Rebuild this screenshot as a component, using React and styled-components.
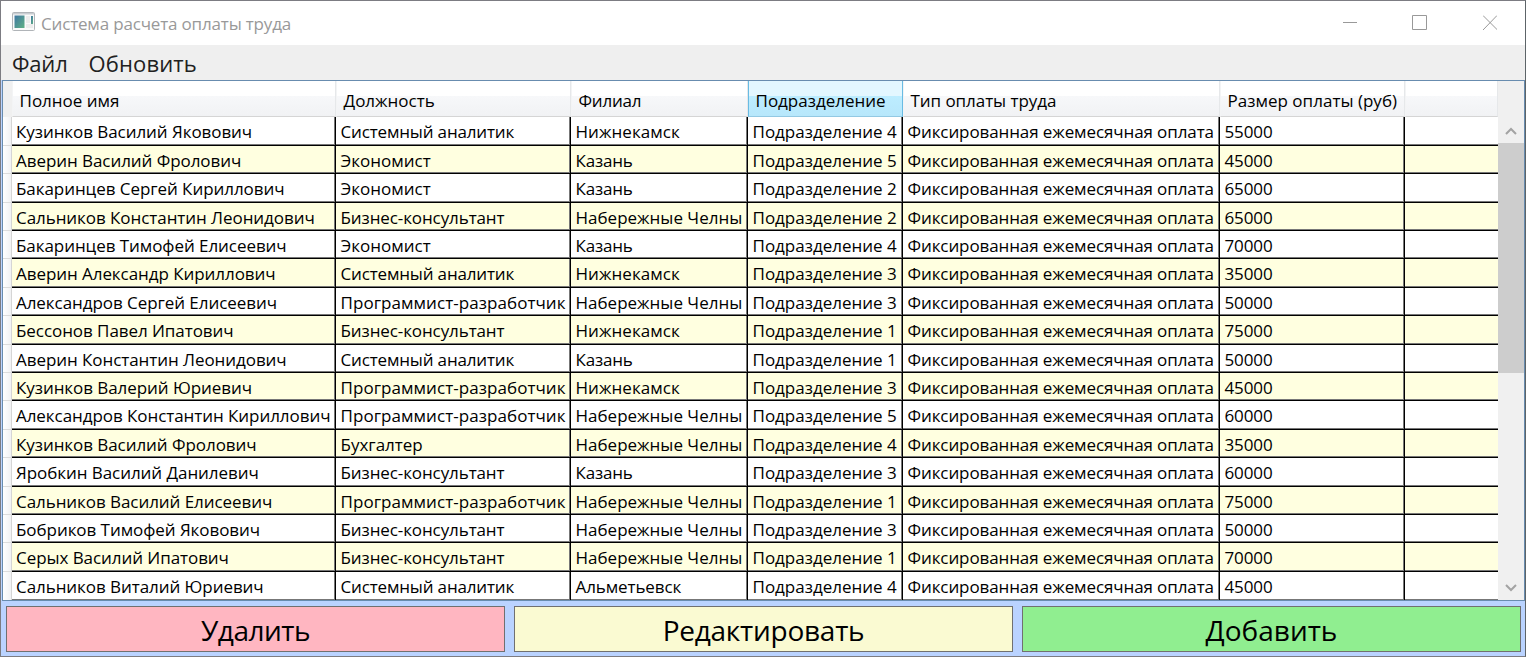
import React from "react";
import styled, { createGlobalStyle } from "styled-components";

const GlobalStyle = createGlobalStyle`
  * { box-sizing: border-box; }
  html, body { margin: 0; padding: 0; overflow: hidden; }
  body { font-family: "Open Sans", "Noto Sans", sans-serif; color: #000; }
`;

const COLUMNS = "324px 235px 177px 155px 317px 185px 93px";

const Window = styled.div`
  width: 1526px;
  height: 657px;
  display: flex;
  flex-direction: column;
  background: #bad3ff;
  border: 1px solid #7c7c82;
  border-right-color: #5d6468;
`;

const TitleBar = styled.header`
  height: 44px;
  flex: none;
  display: flex;
  align-items: center;
  padding: 0 0 0 11px;
  background: #fff;
`;

const AppIcon = styled.svg`
  width: 23px;
  height: 19px;
  margin-top: -3px;
  margin-right: 6px;
`;

const Title = styled.h1`
  flex: 1;
  margin: 0;
  padding-top: 2px;
  font-size: 17px;
  font-weight: 400;
  line-height: 24px;
  letter-spacing: -0.17px;
  color: #999;
  white-space: nowrap;
`;

const Controls = styled.div`
  display: flex;
`;

const ControlButton = styled.button`
  width: 70px;
  height: 44px;
  padding: 0;
  border: 0;
  background: none;
  display: flex;
  align-items: center;
  justify-content: center;
`;

const MenuBar = styled.nav`
  height: 35px;
  flex: none;
  display: flex;
  gap: 21px;
  padding-left: 11px;
  background: #efefef;
`;

const MenuItem = styled.span`
  font-size: 22px;
  line-height: 37px;
  letter-spacing: ${(p) => p.$spacing}px;
  color: #212121;
  white-space: nowrap;
`;

const DataGrid = styled.main`
  height: 521px;
  flex: none;
  display: flex;
  margin-left: 1px;
  border: 1px solid #688caf;
  background: #fff;
  overflow: hidden;
`;

const Table = styled.div`
  width: 1495px;
  flex: none;
  overflow: hidden;
`;

const HeaderRow = styled.div`
  display: grid;
  grid-template-columns: 9px ${COLUMNS};
  grid-template-rows: 36px;
  height: 36px;
`;

const Corner = styled.div`
  background: #f0f0f0;
`;

const HeaderCell = styled.div`
  padding-left: 6.5px;
  font-size: 17px;
  line-height: 40px;
  letter-spacing: ${(p) => p.$spacing || 0}px;
  white-space: nowrap;
  background: ${(p) =>
    p.$active
      ? "linear-gradient(#e3f7ff 0 15px, #bdedff 15px, #b7e7fb 100%)"
      : "linear-gradient(#fff 0 15px, #f7f8fa 15px, #f1f2f4 100%)"};
  border-bottom: 1px solid ${(p) => (p.$active ? "#93c9e3" : "#d5d5d5")};
  border-right: 1px solid ${(p) => (p.$active ? "#69bbe3" : "#e6e8ea")};
  border-left: 1px solid ${(p) => (p.$active ? "#69bbe3" : "#f3f4f5")};
`;

const Row = styled.div`
  display: grid;
  grid-template-columns: 9px ${COLUMNS};
  grid-template-rows: ${(p) => p.$height}px;
  height: ${(p) => p.$height}px;
`;

const RowHandle = styled.div`
  background: linear-gradient(90deg, #fff, #f1f2f4);
  border-right: 1px solid #d5d5d5;
  border-bottom: 1px solid #dcdcdc;
`;

const Cell = styled.div`
  padding-left: 4.5px;
  font-size: 17px;
  line-height: 29px;
  letter-spacing: ${(p) => p.$spacing || 0}px;
  white-space: nowrap;
  background: ${(p) => (p.$alt ? "#ffffe0" : "#fff")};
  border-bottom: 1px solid #000;
  border-right: ${(p) => (p.$last ? "0" : "1px solid #000")};
  box-shadow: inset ${(p) => (p.$last ? "0" : "-1px")} -1px 0 #777;
`;

const NameCell = styled(Cell)`
  padding-left: 4px;
`;

const ScrollBar = styled.div`
  width: 26px;
  flex: none;
  display: flex;
  flex-direction: column;
  background: #f0f0f0;
  padding-top: 36px;
`;

const ScrollArrow = styled.div`
  height: 26px;
  padding-top: 2px;
  flex: none;
  display: flex;
  align-items: center;
  justify-content: center;
`;

const ScrollThumb = styled.div`
  height: 230px;
  background: #cdcdcd;
  margin-bottom: auto;
`;

const Actions = styled.footer`
  display: grid;
  grid-template-columns: 499px 499px 499px;
  column-gap: 9px;
  padding: 5px 0 0 5px;
`;

const ActionButton = styled.button`
  height: 46px;
  padding: 2px 0 0;
  border: 1px solid #707070;
  border-radius: 0;
  background: ${(p) => p.$color};
  font-family: inherit;
  font-size: 28px;
  line-height: 42px;
  letter-spacing: ${(p) => p.$spacing || 0}px;
  color: #000;
`;

const headers = [
  ["Полное имя", 0],
  ["Должность", 0],
  ["Филиал", -0.2],
  ["Подразделение", 0],
  ["Тип оплаты труда", -0.05],
  ["Размер оплаты (руб)", 0.02],
  ["", 0],
];

const SA = "Системный аналитик";
const EC = "Экономист";
const BC = "Бизнес-консультант";
const PR = "Программист-разработчик";
const NK = "Нижнекамск";
const KZ = "Казань";
const NC = "Набережные Челны";

const jobSpacing = { [SA]: -0.16, [BC]: -0.1, [PR]: 0.06 };
const citySpacing = { [KZ]: -0.2, [NK]: 0.05, "Альметьевск": -0.1 };

// Row pitch is 28.4px, spread over whole pixels in a cycle of five rows.
const rowHeights = [29, 28, 29, 28, 28];

const people = [
  ["Кузинков Василий Яковович", SA, NK, 4, 55000],
  ["Аверин Василий Фролович", EC, KZ, 5, 45000],
  ["Бакаринцев Сергей Кириллович", EC, KZ, 2, 65000],
  ["Сальников Константин Леонидович", BC, NC, 2, 65000],
  ["Бакаринцев Тимофей Елисеевич", EC, KZ, 4, 70000],
  ["Аверин Александр Кириллович", SA, NK, 3, 35000],
  ["Александров Сергей Елисеевич", PR, NC, 3, 50000],
  ["Бессонов Павел Ипатович", BC, NK, 1, 75000],
  ["Аверин Константин Леонидович", SA, KZ, 1, 50000],
  ["Кузинков Валерий Юриевич", PR, NK, 3, 45000],
  ["Александров Константин Кириллович", PR, NC, 5, 60000],
  ["Кузинков Василий Фролович", "Бухгалтер", NC, 4, 35000],
  ["Яробкин Василий Данилевич", BC, KZ, 3, 60000],
  ["Сальников Василий Елисеевич", PR, NC, 1, 75000],
  ["Бобриков Тимофей Яковович", BC, NC, 3, 50000],
  ["Серых Василий Ипатович", BC, NC, 1, 70000],
  ["Сальников Виталий Юриевич", SA, "Альметьевск", 4, 45000],
];

export default function App() {
  return (
    <>
      <GlobalStyle />
      <Window>
        <TitleBar>
          <AppIcon viewBox="0 0 23 19">
            <defs>
              <linearGradient id="pane" x1="0" y1="0" x2="1" y2="1">
                <stop offset="0" stopColor="#3f77a3" />
                <stop offset="1" stopColor="#5fb184" />
              </linearGradient>
            </defs>
            <rect x="0.5" y="0.5" width="22" height="18" rx="1" fill="#fafafa" stroke="#b0b4b8" />
            <rect x="1" y="1" width="21" height="1.5" fill="#c9cdd2" />
            <rect x="2.5" y="3.5" width="10" height="12.5" fill="url(#pane)" />
            <rect x="14" y="4" width="4" height="7" fill="#ececec" />
            <rect x="14" y="12" width="7" height="4" fill="#ececec" />
            <rect x="19" y="4" width="2" height="8" fill="url(#pane)" />
          </AppIcon>
          <Title>Система расчета оплаты труда</Title>
          <Controls>
            <ControlButton>
              <svg width="14" height="16"><path d="M0 7.5H14" stroke="#999" /></svg>
            </ControlButton>
            <ControlButton>
              <svg width="16" height="16"><path d="M.5 .5H14.5V14.5H.5Z" fill="none" stroke="#999" /></svg>
            </ControlButton>
            <ControlButton>
              <svg width="14" height="16"><path d="M0 .5L14.5 15M14 .5L0 15" stroke="#999" /></svg>
            </ControlButton>
          </Controls>
        </TitleBar>
        <MenuBar>
          <MenuItem $spacing={-0.2}>Файл</MenuItem>
          <MenuItem $spacing={0.12}>Обновить</MenuItem>
        </MenuBar>
        <DataGrid>
          <Table>
            <HeaderRow>
              <Corner />
              {headers.map(([label, spacing], i) => (
                <HeaderCell key={i} $active={i === 3} $spacing={spacing}>{label}</HeaderCell>
              ))}
            </HeaderRow>
            {people.map(([name, job, city, unit, pay], i) => (
              <Row key={i} $height={i === people.length - 1 ? 29 : rowHeights[i % 5]}>
                <RowHandle />
                <NameCell $alt={i % 2} $spacing={-0.06}>{name}</NameCell>
                <Cell $alt={i % 2} $spacing={jobSpacing[job]}>{job}</Cell>
                <Cell $alt={i % 2} $spacing={citySpacing[city]}>{city}</Cell>
                <Cell $alt={i % 2}>Подразделение {unit}</Cell>
                <Cell $alt={i % 2} $spacing={-0.1}>Фиксированная ежемесячная оплата</Cell>
                <Cell $alt={i % 2} $spacing={-0.1}>{pay}</Cell>
                <Cell $alt={i % 2} $last />
              </Row>
            ))}
          </Table>
          <ScrollBar>
            <ScrollArrow>
              <svg width="12" height="8"><path d="M1 7L6 2L11 7" fill="none" stroke="#a3a3a3" strokeWidth="2" /></svg>
            </ScrollArrow>
            <ScrollThumb />
            <ScrollArrow>
              <svg width="12" height="8"><path d="M1 1L6 6L11 1" fill="none" stroke="#a3a3a3" strokeWidth="2" /></svg>
            </ScrollArrow>
          </ScrollBar>
        </DataGrid>
        <Actions>
          <ActionButton $color="#ffb6c1" $spacing={-0.5}>Удалить</ActionButton>
          <ActionButton $color="#fafad2" $spacing={-0.25}>Редактировать</ActionButton>
          <ActionButton $color="#90ee90">Добавить</ActionButton>
        </Actions>
      </Window>
    </>
  );
}
